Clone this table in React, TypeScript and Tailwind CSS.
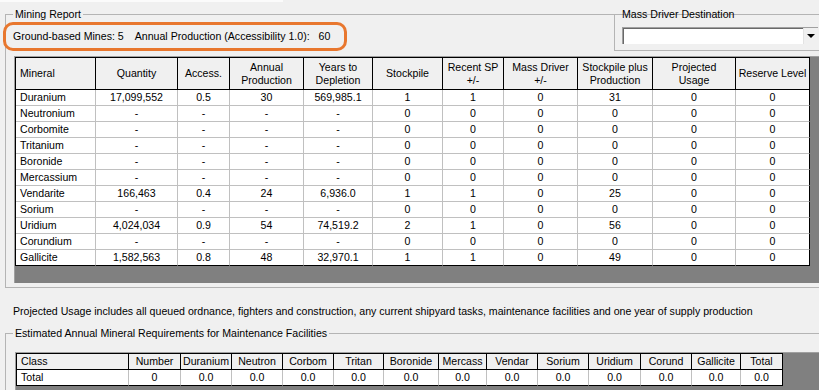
import clsx from "clsx";

const mainCols = [
  "Mineral",
  "Quantity",
  "Access.",
  "Annual Production",
  "Years to Depletion",
  "Stockpile",
  "Recent SP +/-",
  "Mass Driver +/-",
  "Stockpile plus Production",
  "Projected Usage",
  "Reserve Level",
];

const headerLines: Record<string, string[]> = {
  "Annual Production": ["Annual", "Production"],
  "Years to Depletion": ["Years to", "Depletion"],
  "Recent SP +/-": ["Recent SP", "+/-"],
  "Mass Driver +/-": ["Mass Driver", "+/-"],
  "Stockpile plus Production": ["Stockpile plus", "Production"],
  "Projected Usage": ["Projected", "Usage"],
};

const empty = (name: string) => [name, "-", "-", "-", "-", "0", "0", "0", "0", "0", "0"];

const minerals: string[][] = [
  ["Duranium", "17,099,552", "0.5", "30", "569,985.1", "1", "1", "0", "31", "0", "0"],
  empty("Neutronium"),
  empty("Corbomite"),
  empty("Tritanium"),
  empty("Boronide"),
  empty("Mercassium"),
  ["Vendarite", "166,463", "0.4", "24", "6,936.0", "1", "1", "0", "25", "0", "0"],
  empty("Sorium"),
  ["Uridium", "4,024,034", "0.9", "54", "74,519.2", "2", "1", "0", "56", "0", "0"],
  empty("Corundium"),
  ["Gallicite", "1,582,563", "0.8", "48", "32,970.1", "1", "1", "0", "49", "0", "0"],
];

const maintCols = [
  "Class",
  "Number",
  "Duranium",
  "Neutron",
  "Corbom",
  "Tritan",
  "Boronide",
  "Mercass",
  "Vendar",
  "Sorium",
  "Uridium",
  "Corund",
  "Gallicite",
  "Total",
];

const maintTotal = ["Total", "0", "0.0", "0.0", "0.0", "0.0", "0.0", "0.0", "0.0", "0.0", "0.0", "0.0", "0.0", "0.0"];

const MiningGrid = () => (
  <div className="ml-[8px] h-[227px] bg-[#808080] border-l border-t border-[#a0a0a0]">
    <div className="inline-grid grid-cols-[80px_82px_52px_74px_69px_70px_61px_74px_75px_83px_74px] border-l border-t border-black">
      {mainCols.map((col, i) => (
        <div
          key={col}
          className={clsx(
            "h-[32px] bg-[#f0f0f0] border-r border-b border-black flex flex-col justify-center leading-[13px] whitespace-nowrap",
            i === 0 ? "items-start pl-[4px]" : "items-center"
          )}
        >
          {(headerLines[col] ?? [col]).map((line) => (
            <span key={line}>{line}</span>
          ))}
        </div>
      ))}
      {minerals.map((row, r) =>
        row.map((cell, c) => (
          <div
            key={`${r}-${c}`}
            className={clsx(
              "h-[16px] bg-white border-r border-b border-[#c0c0c0] leading-[15px] whitespace-nowrap overflow-hidden",
              c === 0 ? "pl-[4px]" : "text-center",
              c === row.length - 1 && "border-r-black",
              r === minerals.length - 1 && "border-b-black"
            )}
          >
            {cell}
          </div>
        ))
      )}
    </div>
  </div>
);

const MaintenanceGrid = () => (
  <div className="ml-[9px] mt-[12px] h-[40px] bg-[#808080] border-l border-t border-[#a0a0a0]">
    <div className="inline-grid grid-cols-[112px_52px_51px_51px_51px_50px_55px_48px_51px_51px_52px_51px_49px_42px] border-l border-t border-black">
      {maintCols.map((col, i) => (
        <div
          key={col}
          className={clsx(
            "h-[16px] bg-[#f0f0f0] border-r border-b border-black leading-[15px] whitespace-nowrap overflow-hidden",
            i === 0 ? "pl-[4px]" : "text-center"
          )}
        >
          {col}
        </div>
      ))}
      {maintTotal.map((cell, c) => (
        <div
          key={c}
          className={clsx(
            "h-[16px] bg-white border-r border-b border-[#c0c0c0] border-b-black leading-[15px] whitespace-nowrap",
            c === 0 ? "pl-[4px]" : "text-center",
            c === maintTotal.length - 1 && "border-r-black"
          )}
        >
          {cell}
        </div>
      ))}
    </div>
  </div>
);

export default function App() {
  return (
    <div className="w-[819px] h-[390px] overflow-hidden bg-[#f0f0f0] text-black text-[10.6px] leading-[13px] font-['Liberation_Sans',Arial,sans-serif]">
      <div className="h-[2px] w-[283px] bg-[#fbfbfb]" />

      <fieldset className="ml-[5px] mt-[6px] w-[840px] border-l border-t border-b border-[#b4b4b4]">
        <legend className="ml-[7px] px-[2px] leading-[13px]">Mining Report</legend>

        <div className="flex h-[35px]">
          <div className="relative w-[608px] pl-[7px] pt-[9px] whitespace-nowrap">
            <span>Ground-based Mines: 5</span>
            <span className="ml-[11px]">Annual Production (Accessibility 1.0):</span>
            <span className="ml-[9px]">60</span>
            <div className="absolute left-[-3px] top-[1px] w-[344px] h-[29px] rounded-[10px] border-[3px] border-[#e8772e]" />
          </div>

          <fieldset className="self-start -mt-[13px] flex-1 border-l border-t border-b border-[#b4b4b4] pb-[6px]">
            <legend className="ml-[5px] px-[2px] leading-[13px]">Mass Driver Destination</legend>
            <div className="ml-[7px] mt-[6px] w-[196px] h-[17px] flex bg-white border-l border-t border-[#a0a0a0]">
              <div className="flex-1 border-l border-t border-[#696969]" />
              <div className="w-[15px] h-full flex items-center justify-center bg-[#f0f0f0] border-l border-[#e3e3e3]">
                <div className="w-0 h-0 border-l-[4px] border-r-[4px] border-t-[4px] border-l-transparent border-r-transparent border-t-black" />
              </div>
            </div>
          </fieldset>
        </div>

        <MiningGrid />
        <div className="h-[4px]" />
      </fieldset>

      <p className="mt-[17px] pl-[13px] whitespace-nowrap">
        Projected Usage includes all queued ordnance, fighters and construction, any current shipyard tasks,
        maintenance facilities and one year of supply production
      </p>

      <fieldset className="ml-[5px] mt-[9px] w-[840px] h-[80px] border-l border-t border-[#b4b4b4]">
        <legend className="ml-[7px] px-[2px] leading-[13px]">
          Estimated Annual Mineral Requirements for Maintenance Facilities
        </legend>
        <MaintenanceGrid />
      </fieldset>
    </div>
  );
}
